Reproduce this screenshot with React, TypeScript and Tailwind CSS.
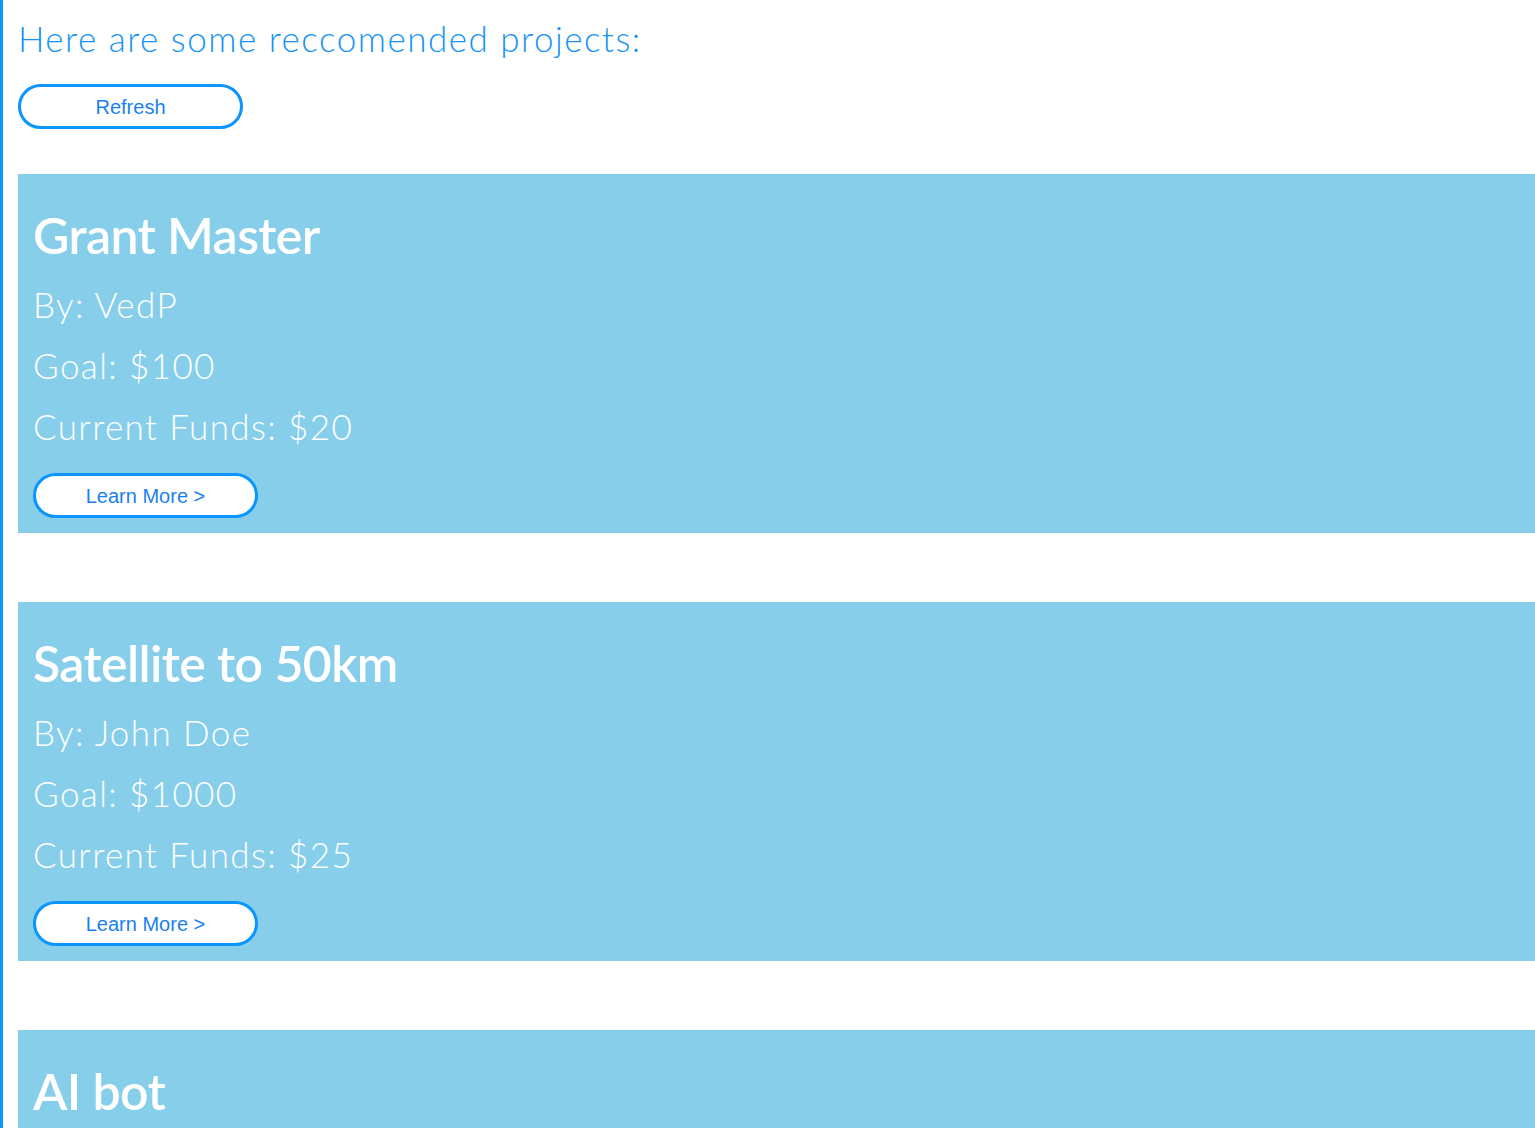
const projects = [
  { title: 'Grant Master', by: 'VedP', goal: 100, funds: 20 },
  { title: 'Satellite to 50km', by: 'John Doe', goal: 1000, funds: 25 },
  { title: 'AI bot', by: 'Jane Smith', goal: 500, funds: 40 },
];

function PillButton({ label }: { label: string }) {
  return (
    <button className="h-[45px] w-[225px] rounded-full border-[3px] border-[#0a95ff] bg-white text-[20px] text-[#1a7ff0] font-['Liberation_Sans',Arial,sans-serif] cursor-pointer">
      {label}
    </button>
  );
}

export default function App() {
  return (
    <div className="min-h-screen overflow-hidden border-l-[3px] border-[#0a95ff] bg-white pl-[15px] pt-[14px] font-['Lato',sans-serif]">
      <h1 className="text-[35px] font-light leading-[48px] tracking-[1.5px] text-[#1793f5]">
        Here are some reccomended projects:
      </h1>
      <div className="mt-[22px]">
        <PillButton label="Refresh" />
      </div>

      {/* project cards */}
      <div className="mt-[45px] flex flex-col gap-[69px]">
        {projects.map(p => (
          <div key={p.title} className="bg-[#87ceeb] px-[15px] pt-[26px] pb-[15px] text-white">
            <h2 className="text-[50px] font-semibold leading-[70px] tracking-[-0.6px] mb-[4px]">{p.title}</h2>
            <p className="text-[35px] font-light leading-[61px] tracking-[1.4px]">By: {p.by}</p>
            <p className="text-[35px] font-light leading-[61px] tracking-[1.4px]">Goal: ${p.goal}</p>
            <p className="text-[35px] font-light leading-[61px] tracking-[1.4px]">Current Funds: ${p.funds}</p>
            <div className="mt-[16px]">
              <PillButton label="Learn More >" />
            </div>
          </div>
        ))}
      </div>
    </div>
  );
}
